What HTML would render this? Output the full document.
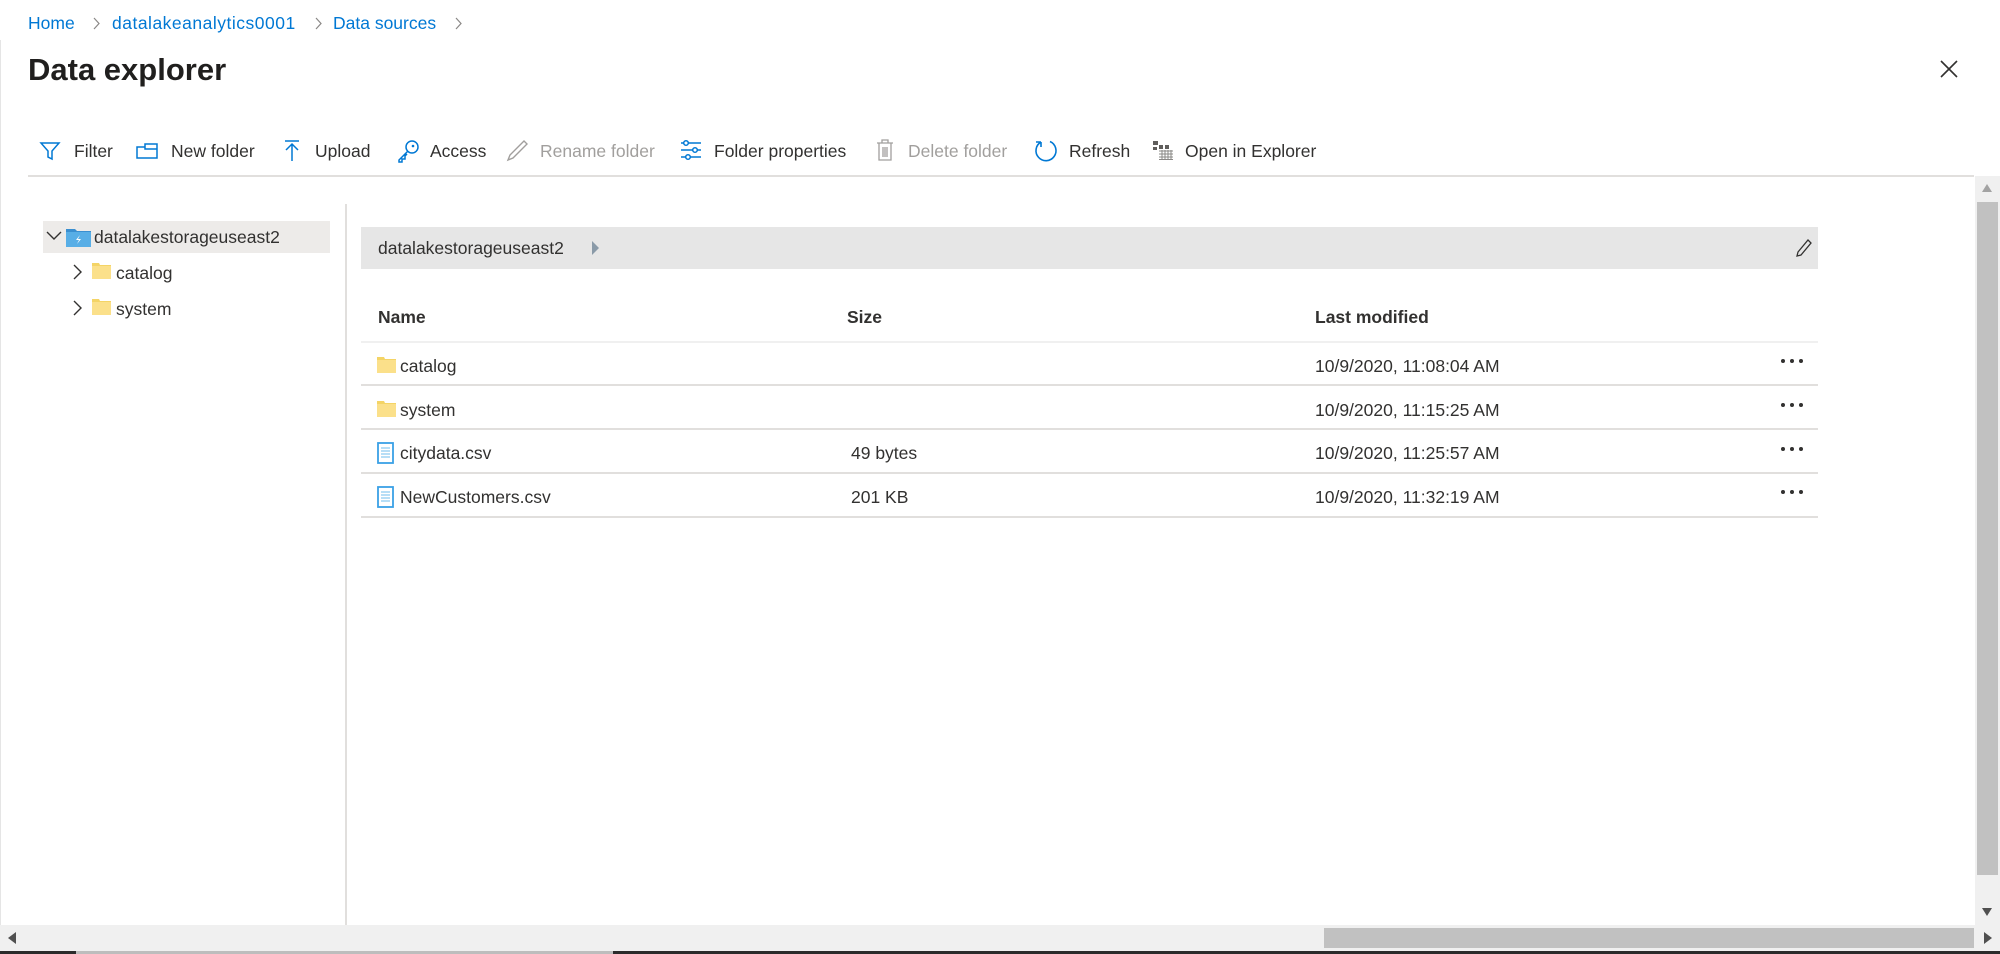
<!DOCTYPE html>
<html><head><meta charset="utf-8"><style>
*{margin:0;padding:0;box-sizing:border-box}
body{width:2000px;height:954px;overflow:hidden;background:#fff;font-family:"Liberation Sans",sans-serif;color:#323130;position:relative}
.a{position:absolute;white-space:nowrap}
.t{font-size:17.5px;line-height:24px}
.bl{color:#0078d4}
.g{color:#a19f9d}
svg{position:absolute;overflow:visible}
.line{position:absolute;background:#e1dfdd;height:2px}
</style></head><body>
<div class="a" style="left:0;top:40px;width:1px;height:885px;background:#e5e5e5"></div>
<!-- breadcrumb -->
<div class="a t bl" style="left:28px;top:11px">Home</div>
<svg style="left:93px;top:17px" width="7" height="13"><path d="M1 1L6 6.5L1 12" fill="none" stroke="#8a8886" stroke-width="1.2"/></svg>
<div class="a t bl" style="left:112px;top:11px;letter-spacing:0.5px">datalakeanalytics0001</div>
<svg style="left:315px;top:17px" width="7" height="13"><path d="M1 1L6 6.5L1 12" fill="none" stroke="#8a8886" stroke-width="1.2"/></svg>
<div class="a t bl" style="left:333px;top:11px">Data sources</div>
<svg style="left:455px;top:17px" width="7" height="13"><path d="M1 1L6 6.5L1 12" fill="none" stroke="#8a8886" stroke-width="1.2"/></svg>
<div class="a" style="left:28px;top:50px;font-size:31px;line-height:40px;font-weight:600;color:#201f1e">Data explorer</div>
<svg style="left:1940px;top:60px" width="18" height="18"><path d="M1 1L17 17M17 1L1 17" stroke="#323130" stroke-width="1.6"/></svg>
<!-- toolbar -->
<svg style="left:40px;top:141px" width="20" height="20"><path d="M1 2H19L12 10V18L8 16V10Z" fill="none" stroke="#0078d4" stroke-width="1.5"/></svg>
<div class="a t" style="left:74px;top:139px">Filter</div>
<svg style="left:136px;top:143px" width="22" height="16"><path d="M1 4H9V1H21V15H1Z M9 4V6H21" fill="none" stroke="#0078d4" stroke-width="1.5"/></svg>
<div class="a t" style="left:171px;top:139px">New folder</div>
<svg style="left:284px;top:140px" width="16" height="22"><path d="M1 1H15M8 4V21M2 10L8 4L14 10" fill="none" stroke="#0078d4" stroke-width="1.5"/></svg>
<div class="a t" style="left:315px;top:139px">Upload</div>
<svg style="left:397px;top:139px" width="24" height="24"><circle cx="15" cy="8" r="6" fill="none" stroke="#0078d4" stroke-width="1.5"/><circle cx="16" cy="7" r="1.3" fill="#0078d4"/><path d="M11 12L2 21V23H5V20H8V17L10 15" fill="none" stroke="#0078d4" stroke-width="1.5"/></svg>
<div class="a t" style="left:430px;top:139px">Access</div>
<svg style="left:507px;top:139px" width="22" height="22"><path d="M17 2L20 5L6 19L1 21L3 16Z" fill="none" stroke="#a19f9d" stroke-width="1.4"/></svg>
<div class="a t g" style="left:540px;top:139px">Rename folder</div>
<svg style="left:680px;top:140px" width="22" height="20"><g stroke="#0078d4" stroke-width="1.5" fill="#fff"><path d="M1 3H21M1 10H21M1 17H21"/><circle cx="6" cy="3" r="2.3"/><circle cx="15" cy="10" r="2.3"/><circle cx="8" cy="17" r="2.3"/></g></svg>
<div class="a t" style="left:714px;top:139px">Folder properties</div>
<svg style="left:876px;top:139px" width="18" height="22"><path d="M1 4H17M6 4V1H12V4M3 4V21H15V4M7 8V18M9 8V18M11 8V18" fill="none" stroke="#a19f9d" stroke-width="1.3"/></svg>
<div class="a t g" style="left:908px;top:139px">Delete folder</div>
<svg style="left:1034px;top:139px" width="24" height="24"><path d="M7 3A10 10 0 1 0 16 2.5M7 3V8M7 3H2" fill="none" stroke="#0078d4" stroke-width="1.6"/></svg>
<div class="a t" style="left:1069px;top:139px">Refresh</div>
<svg style="left:1152px;top:140px" width="22" height="20"><g fill="#605e5c"><rect x="1" y="1" width="5" height="4"/><rect x="7" y="5" width="4" height="4"/><rect x="13" y="5" width="4" height="4"/><rect x="1" y="7" width="4" height="3"/></g><path d="M7 11H21M7 14H21M7 17H21M7 19.5H21M10 10V20M13 10V20M16 10V20M19 10V20" stroke="#8a8886" stroke-width="1"/></svg>
<div class="a t" style="left:1185px;top:139px">Open in Explorer</div>
<div class="line" style="left:28px;top:175px;width:1946px;background:#e1dfdd"></div>
<!-- left tree -->
<div class="a" style="left:43px;top:221px;width:287px;height:32px;background:#edebe9"></div>
<svg style="left:46px;top:231px" width="16" height="10"><path d="M1 1L8 8L15 1" fill="none" stroke="#323130" stroke-width="1.4"/></svg>
<svg style="left:66px;top:227px" width="25" height="20"><path d="M0 2H9L11 4H25V20H0Z" fill="#3a8fd0"/><rect x="0" y="5" width="25" height="15" fill="#58aee6"/><path d="M14 8L10 13H13L11 17L15 12H12Z" fill="#fff"/></svg>
<div class="a t" style="left:94px;top:225px">datalakestorageuseast2</div>
<svg style="left:73px;top:264px" width="10" height="16"><path d="M1 1L8 8L1 15" fill="none" stroke="#323130" stroke-width="1.4"/></svg>
<svg style="left:92px;top:263px" width="19" height="16"><path d="M0 0H7L8 2H19V16H0Z" fill="#f4d466"/><rect x="0" y="3" width="19" height="13" fill="#fbe08a"/></svg>
<div class="a t" style="left:116px;top:261px">catalog</div>
<svg style="left:73px;top:300px" width="10" height="16"><path d="M1 1L8 8L1 15" fill="none" stroke="#323130" stroke-width="1.4"/></svg>
<svg style="left:92px;top:299px" width="19" height="16"><path d="M0 0H7L8 2H19V16H0Z" fill="#f4d466"/><rect x="0" y="3" width="19" height="13" fill="#fbe08a"/></svg>
<div class="a t" style="left:116px;top:297px">system</div>
<div class="a" style="left:345px;top:204px;width:2px;height:721px;background:#e1dfdd"></div>
<!-- breadcrumb bar -->
<div class="a" style="left:361px;top:227px;width:1457px;height:42px;background:#e6e6e6"></div>
<div class="a t" style="left:378px;top:236px">datalakestorageuseast2</div>
<svg style="left:592px;top:241px" width="8" height="14"><path d="M0 0L7 7L0 14Z" fill="#8a9aa8"/></svg>
<svg style="left:1796px;top:239px" width="16" height="18"><path d="M12 1L15 4L5 16L1 17L2 13Z" fill="none" stroke="#323130" stroke-width="1.3"/></svg>
<!-- table -->
<div class="a t" style="left:378px;top:305px;font-weight:600">Name</div>
<div class="a t" style="left:847px;top:305px;font-weight:600">Size</div>
<div class="a t" style="left:1315px;top:305px;font-weight:600">Last modified</div>
<div class="line" style="left:361px;top:341px;width:1457px;background:#f0f0f0"></div>
<div class="line" style="left:361px;top:384px;width:1457px"></div>
<div class="line" style="left:361px;top:428px;width:1457px"></div>
<div class="line" style="left:361px;top:472px;width:1457px"></div>
<div class="line" style="left:361px;top:516px;width:1457px"></div>

<svg style="left:377px;top:357px" width="19" height="16"><path d="M0 0H7L8 2H19V16H0Z" fill="#f4d466"/><rect x="0" y="3" width="19" height="13" fill="#fbe08a"/></svg>
<div class="a t" style="left:400px;top:354px">catalog</div>
<div class="a t" style="left:1315px;top:354px">10/9/2020, 11:08:04 AM</div>

<svg style="left:377px;top:401px" width="19" height="16"><path d="M0 0H7L8 2H19V16H0Z" fill="#f4d466"/><rect x="0" y="3" width="19" height="13" fill="#fbe08a"/></svg>
<div class="a t" style="left:400px;top:398px">system</div>
<div class="a t" style="left:1315px;top:398px">10/9/2020, 11:15:25 AM</div>

<svg style="left:377px;top:442px" width="17" height="22"><rect x="1" y="1" width="15" height="20" fill="#fff" stroke="#3aa0e6" stroke-width="1.8"/><path d="M4 6H13M4 9H13M4 12H13M4 15H13" stroke="#8ccaf0" stroke-width="1.2"/></svg>
<div class="a t" style="left:400px;top:441px">citydata.csv</div>
<div class="a t" style="left:851px;top:441px">49 bytes</div>
<div class="a t" style="left:1315px;top:441px">10/9/2020, 11:25:57 AM</div>

<svg style="left:377px;top:486px" width="17" height="22"><rect x="1" y="1" width="15" height="20" fill="#fff" stroke="#3aa0e6" stroke-width="1.8"/><path d="M4 6H13M4 9H13M4 12H13M4 15H13" stroke="#8ccaf0" stroke-width="1.2"/></svg>
<div class="a t" style="left:400px;top:485px">NewCustomers.csv</div>
<div class="a t" style="left:851px;top:485px">201 KB</div>
<div class="a t" style="left:1315px;top:485px">10/9/2020, 11:32:19 AM</div>

<svg style="left:1780px;top:358px" width="26" height="6"><g fill="#323130"><circle cx="3" cy="3" r="2"/><circle cx="12" cy="3" r="2"/><circle cx="21" cy="3" r="2"/></g></svg>
<svg style="left:1780px;top:402px" width="26" height="6"><g fill="#323130"><circle cx="3" cy="3" r="2"/><circle cx="12" cy="3" r="2"/><circle cx="21" cy="3" r="2"/></g></svg>
<svg style="left:1780px;top:446px" width="26" height="6"><g fill="#323130"><circle cx="3" cy="3" r="2"/><circle cx="12" cy="3" r="2"/><circle cx="21" cy="3" r="2"/></g></svg>
<svg style="left:1780px;top:489px" width="26" height="6"><g fill="#323130"><circle cx="3" cy="3" r="2"/><circle cx="12" cy="3" r="2"/><circle cx="21" cy="3" r="2"/></g></svg>

<!-- vertical scrollbar -->
<div class="a" style="left:1975px;top:176px;width:25px;height:749px;background:#f0f0f0"></div>
<div class="a" style="left:1977px;top:202px;width:21px;height:673px;background:#c1c1c1"></div>
<svg style="left:1982px;top:184px" width="10" height="8"><path d="M5 0L10 8H0Z" fill="#a3a3a3"/></svg>
<svg style="left:1982px;top:908px" width="10" height="8"><path d="M0 0H10L5 8Z" fill="#505050"/></svg>
<!-- horizontal scrollbar -->
<div class="a" style="left:0;top:925px;width:2000px;height:26px;background:#f0f0f0"></div>
<div class="a" style="left:1324px;top:928px;width:650px;height:20px;background:#c1c1c1"></div>
<svg style="left:8px;top:932px" width="8" height="12"><path d="M8 0V12L0 6Z" fill="#505050"/></svg>
<svg style="left:1984px;top:932px" width="8" height="12"><path d="M0 0L8 6L0 12Z" fill="#505050"/></svg>
<div class="a" style="left:0;top:951px;width:2000px;height:3px;background:#2b2b2b"></div>
<div class="a" style="left:76px;top:951px;width:537px;height:3px;background:#bdbdbd"></div>
</body></html>
